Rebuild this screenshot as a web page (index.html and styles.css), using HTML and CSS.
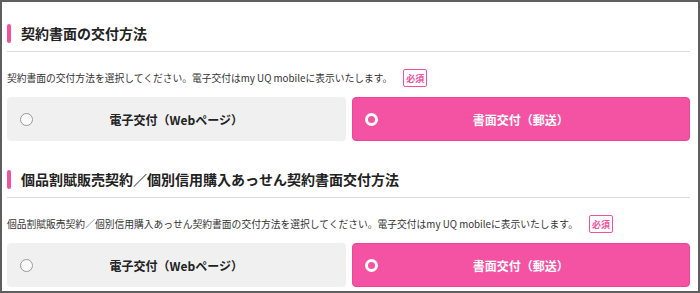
FILE: index.html
```html
<!DOCTYPE html>
<html lang="ja">
<head>
<meta charset="utf-8">
<link rel="stylesheet" href="styles.css">
</head>
<body>
<div class="frame">
  <section class="section">
    <h2 class="heading">契約書面の交付方法</h2>
    <div class="desc-row">
      <p class="desc">契約書面の交付方法を選択してください。電子交付はmy UQ mobileに表示いたします。</p>
      <span class="badge">必須</span>
    </div>
    <div class="options">
      <label class="option">
        <span class="radio"></span>
        <span class="option-label">電子交付（Webページ）</span>
      </label>
      <label class="option selected">
        <span class="radio"></span>
        <span class="option-label">書面交付（郵送）</span>
      </label>
    </div>
  </section>
  <section class="section">
    <h2 class="heading">個品割賦販売契約／個別信用購入あっせん契約書面交付方法</h2>
    <div class="desc-row">
      <p class="desc">個品割賦販売契約／個別信用購入あっせん契約書面の交付方法を選択してください。電子交付はmy UQ mobileに表示いたします。</p>
      <span class="badge">必須</span>
    </div>
    <div class="options">
      <label class="option">
        <span class="radio"></span>
        <span class="option-label">電子交付（Webページ）</span>
      </label>
      <label class="option selected">
        <span class="radio"></span>
        <span class="option-label">書面交付（郵送）</span>
      </label>
    </div>
  </section>
</div>
</body>
</html>
```

FILE: styles.css
```css
* { box-sizing: border-box; }
html, body { margin: 0; padding: 0; background: #fff; }
body {
  font-family: "Noto Sans CJK JP", "Noto Sans", sans-serif;
  color: #222;
}
.frame {
  width: 700px;
  height: 293px;
  border: 2px solid #5e5e5e;
  padding: 22px 8px 0 5px;
  display: flex;
  flex-direction: column;
  gap: 29px;
  overflow: hidden;
}
.section { display: flex; flex-direction: column; }
.heading {
  margin: 0;
  display: flex;
  align-items: center;
  gap: 10px;
  font-size: 14px;
  font-weight: 700;
  line-height: 19px;
  color: #222;
  padding-bottom: 8px;
  border-bottom: 1px solid #dcdcdc;
}
.heading::before {
  content: "";
  width: 4px;
  height: 19px;
  border-radius: 2px;
  background: #f0529f;
  flex: none;
}
.desc-row {
  display: flex;
  align-items: center;
  gap: 11px;
  margin-top: 17px;
  height: 18px;
}
.desc {
  margin: 0;
  font-size: 9.78px;
  line-height: 18px;
  color: #333;
  white-space: nowrap;
}
.badge {
  display: inline-flex;
  align-items: center;
  justify-content: center;
  width: 24px;
  height: 18px;
  border: 1px solid #f0529f;
  border-radius: 2px;
  color: #f0529f;
  font-size: 9px;
  font-weight: 700;
}
.options {
  margin-top: 10px;
  display: grid;
  grid-template-columns: 1fr 1fr;
  gap: 6px;
}
.option {
  position: relative;
  height: 44px;
  border-radius: 4px;
  background: #f0f0f0;
  display: flex;
  align-items: center;
  justify-content: center;
  font-size: 12px;
  font-weight: 700;
  color: #222;
}
.option .radio {
  position: absolute;
  left: 13px;
  top: 50%;
  width: 13px;
  height: 13px;
  margin-top: -6px;
  border: 1px solid #999;
  border-radius: 50%;
  background: #fafafa;
}
.option.selected {
  background: #f353a2;
  border: 1px solid #ef4598;
  color: #fff;
}
.option.selected .radio {
  left: 12px;
  border: 3px solid #fff;
  background: transparent;
}
.option-label { padding-left: 0; }
```
